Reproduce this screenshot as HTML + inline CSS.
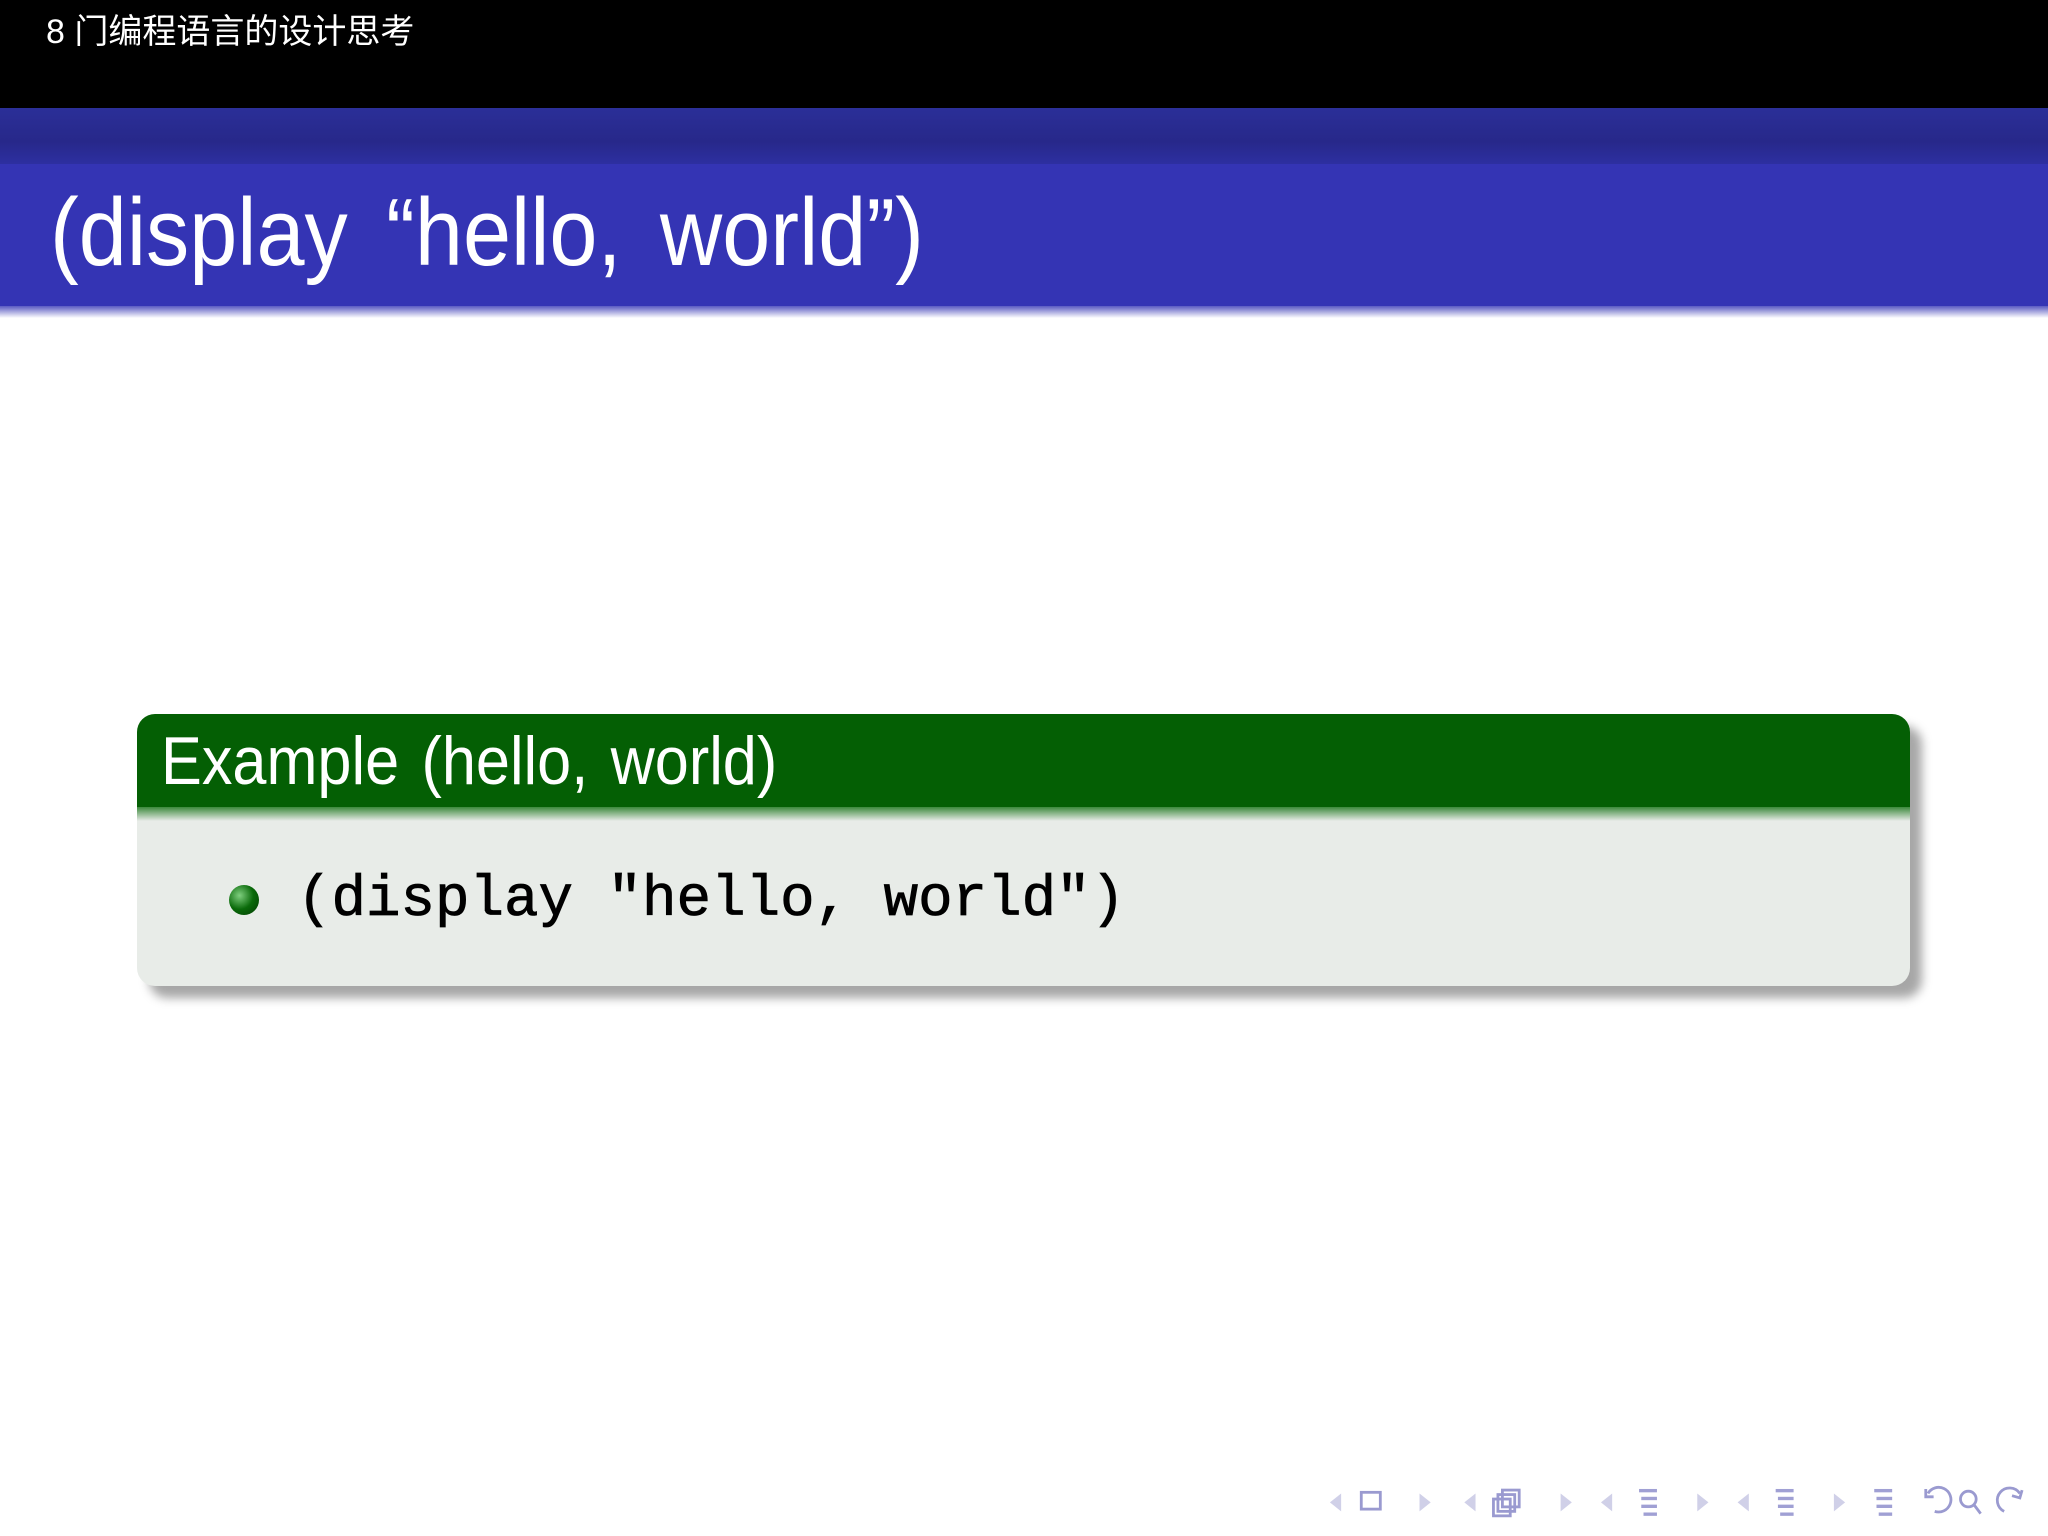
<!DOCTYPE html>
<html><head><meta charset="utf-8"><style>
body{margin:0;width:2048px;height:1536px;position:relative;background:#fff;overflow:hidden;font-family:"Liberation Sans","Noto Sans CJK SC",sans-serif}
.top{position:absolute;left:0;top:0;width:2048px;height:108px;background:#000}
.top span{position:absolute;left:46px;top:4px;color:#fff;font-size:34px}
.band1{position:absolute;left:0;top:108px;width:2048px;height:56px;background:linear-gradient(#2b2f98,#27288a 60%,#2d2fa0)}
.band2{position:absolute;left:0;top:164px;width:2048px;height:142px;background:#3434b4}
.fade{position:absolute;left:0;top:306px;width:2048px;height:12px;background:linear-gradient(#5a5ac2,#fff)}
.title{position:absolute;left:50px;top:178px;color:#fff;font-size:96px;white-space:nowrap;transform:scaleX(0.9);transform-origin:left;word-spacing:16px}
.box{position:absolute;left:137px;top:714px;width:1773px;height:272px;border-radius:18px;background:#e8ece8;box-shadow:12px 12px 10px rgba(0,0,0,.35);overflow:hidden}
.bh{position:absolute;left:0;top:0;width:100%;height:93px;background:#045f04}
.bf{position:absolute;left:0;top:93px;width:100%;height:14px;background:linear-gradient(#3c8a3c,#e8ece8)}
.bt{position:absolute;left:24px;top:8px;color:#fff;font-size:68px;white-space:nowrap;transform:scaleX(0.9);transform-origin:left;word-spacing:6px}
.bul{position:absolute;left:92px;top:171px;width:30px;height:30px;border-radius:50%;background:radial-gradient(circle at 35% 35%,#7fcf7f,#0a6a0a 50%,#023a02)}
.code{position:absolute;left:160px;top:154px;font-family:"Liberation Mono",monospace;font-size:57.5px;color:#000;white-space:nowrap;-webkit-text-stroke:0.8px #000}
.nav{position:absolute;left:1312px;top:1480px;transform:scale(1.12);transform-origin:left top}
</style></head><body>
<div class="top"><span>8 门编程语言的设计思考</span></div>
<div class="band1"></div><div class="band2"></div><div class="fade"></div>
<div class="title">(display “hello, world”)</div>
<div class="box"><div class="bh"></div><div class="bf"></div>
<div class="bt">Example (hello, world)</div>
<div class="bul"></div>
<div class="code">(display "hello, world")</div></div>
<svg class="nav" width="720" height="40" viewBox="0 0 720 40">
<g fill="#d0d0e8">
<path d="M16 20 L26 12 L26 28Z"/><path d="M96 12 L106 20 L96 28Z"/>
<path d="M136 20 L146 12 L146 28Z"/><path d="M222 12 L232 20 L222 28Z"/>
<path d="M258 20 L268 12 L268 28Z"/><path d="M344 12 L354 20 L344 28Z"/>
<path d="M380 20 L390 12 L390 28Z"/><path d="M466 12 L476 20 L466 28Z"/>
</g>
<g fill="none" stroke="#9a9ad0" stroke-width="2.5">
<rect x="44" y="11" width="17" height="15"/>
<rect x="162" y="17" width="15" height="15"/><rect x="166" y="13" width="15" height="15"/><rect x="170" y="9" width="15" height="15"/>
<path d="M556 28 a11 11 0 1 0 -6 -16 M548 8 v7 h7"/>
<circle cx="586" cy="17" r="7"/><path d="M591 22 l6 8"/>
<path d="M618 28 a11 11 0 1 1 14 -16 M634 9 l-2 7 -7 -2"/>
</g>
<g fill="#a0a0d4">
<rect x="292" y="8" width="16" height="3"/><rect x="294" y="15" width="14" height="3"/><rect x="294" y="22" width="14" height="3"/><rect x="296" y="29" width="12" height="3"/>
<rect x="414" y="8" width="16" height="3"/><rect x="416" y="15" width="14" height="3"/><rect x="416" y="22" width="14" height="3"/><rect x="418" y="29" width="12" height="3"/>
<rect x="502" y="8" width="16" height="3"/><rect x="504" y="15" width="14" height="3"/><rect x="504" y="22" width="14" height="3"/><rect x="506" y="29" width="12" height="3"/>
</g>
</svg>
</body></html>
